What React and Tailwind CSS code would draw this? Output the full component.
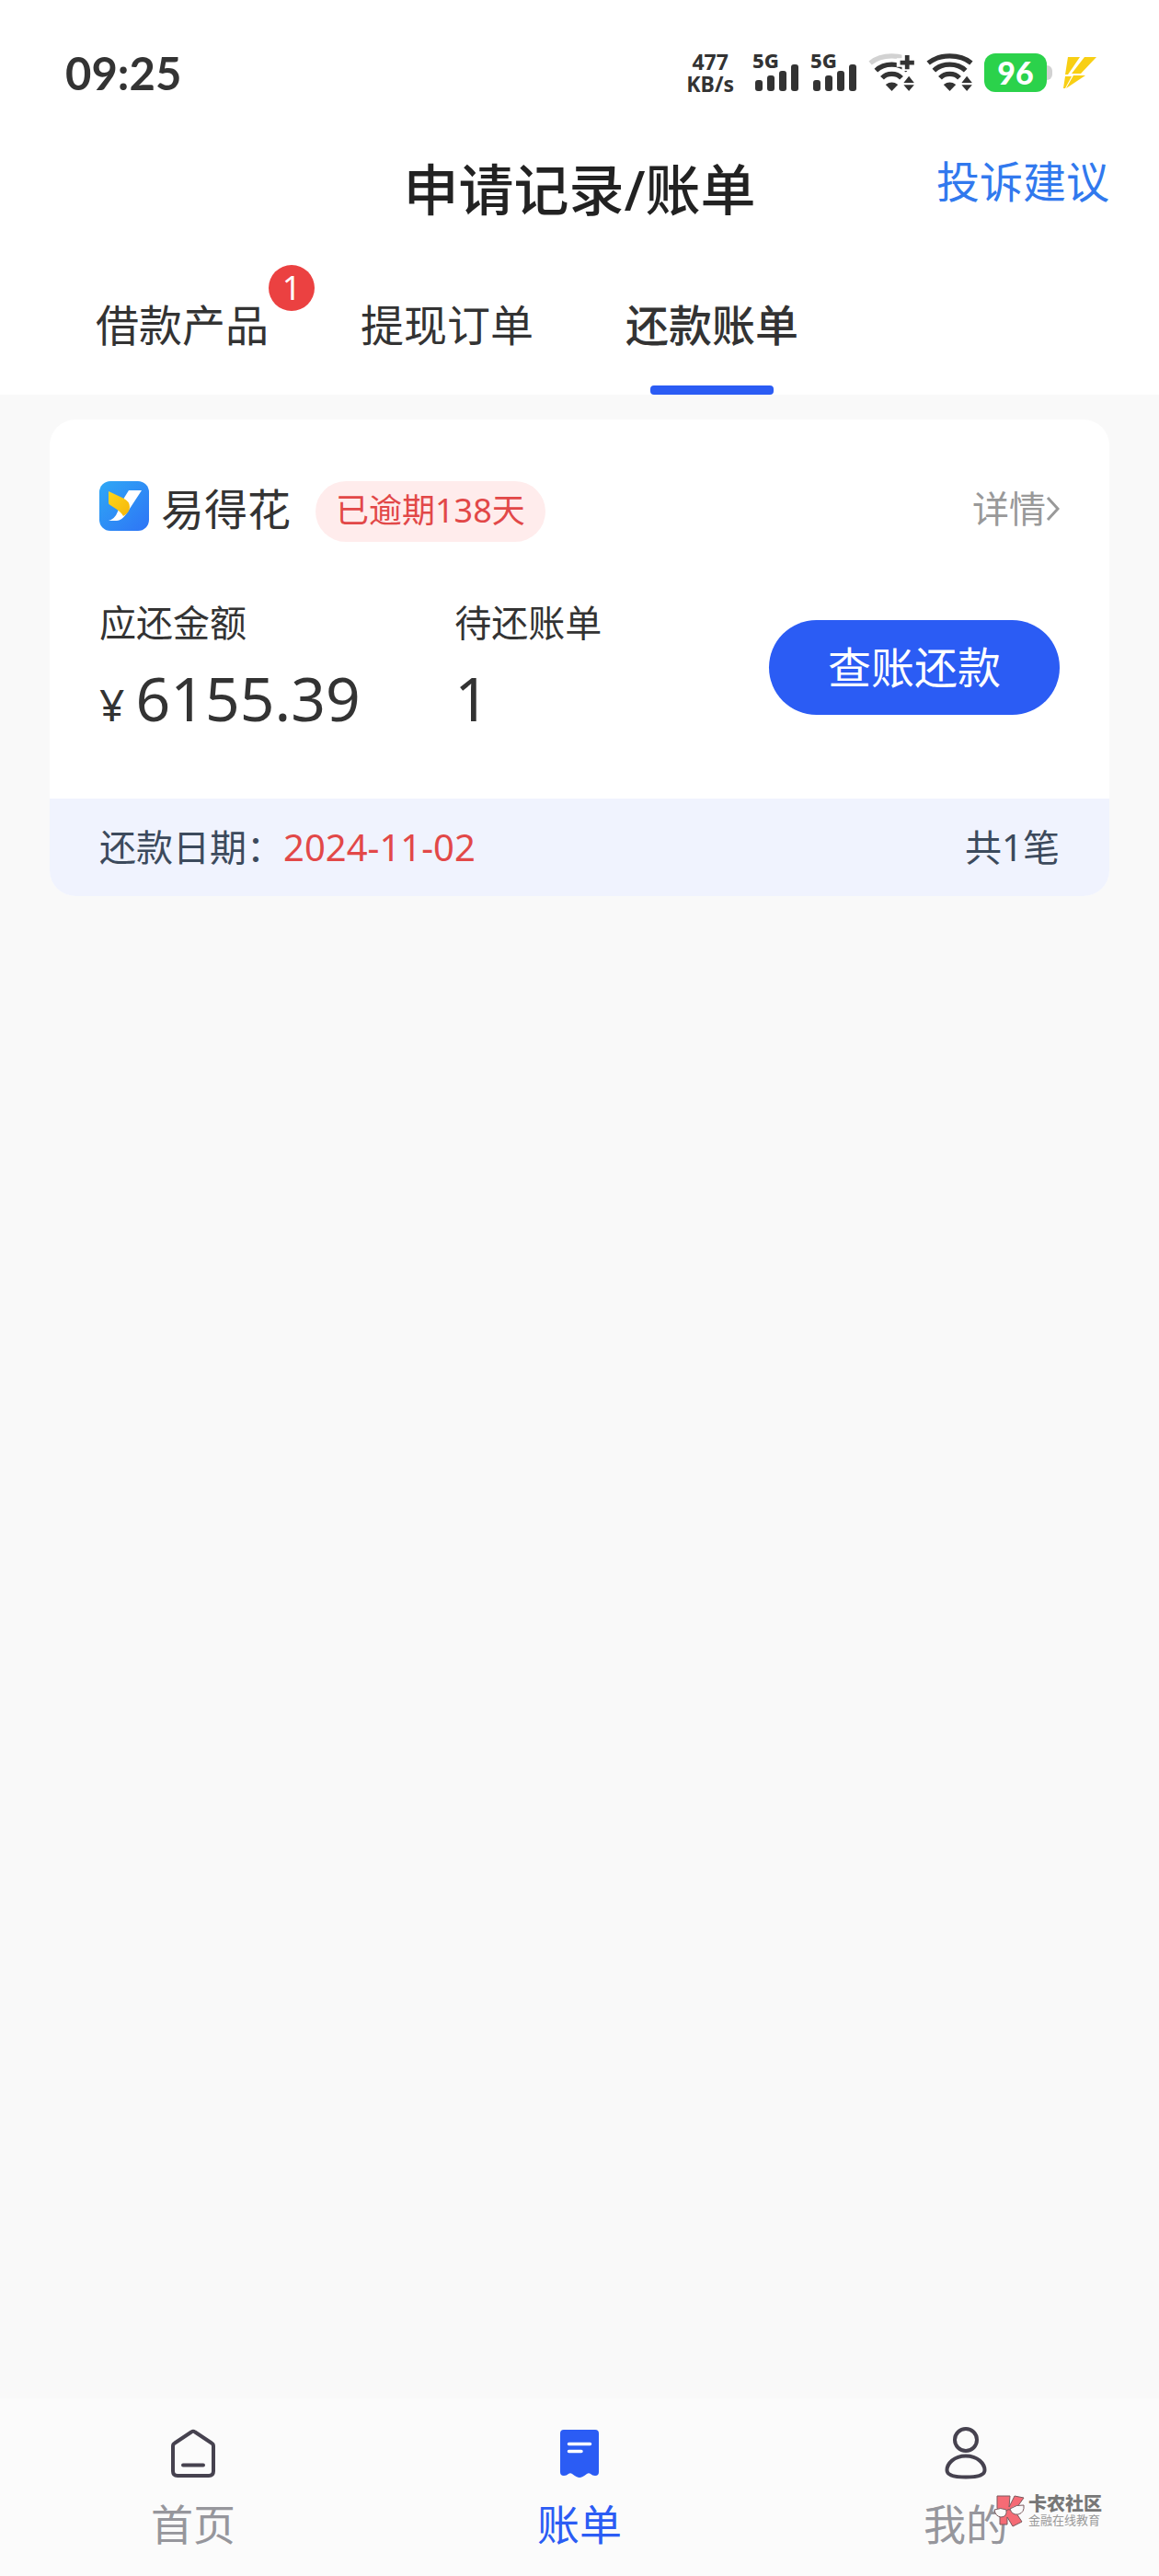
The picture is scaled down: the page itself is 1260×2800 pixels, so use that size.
import React, { useState } from 'react';

const tabs = [
  { id: 'loan', label: '借款产品', badge: 1 },
  { id: 'withdraw', label: '提现订单' },
  { id: 'bill', label: '还款账单' },
];

const Signal = () => (
  <svg width="51" height="58" viewBox="0 -6 51 58" fill="#333333">
    <text x="0" y="18" fontSize="22" fontWeight="800" fontFamily="'Noto Sans', sans-serif">5G</text>
    <rect x="3" y="31" width="8" height="12" rx="3" />
    <rect x="16" y="26" width="8" height="17" rx="3" />
    <rect x="29" y="21" width="8" height="22" rx="3" />
    <rect x="42" y="14" width="8" height="29" rx="3" />
  </svg>
);

const Wifi = ({ plus }) => (
  <svg width="51" height="42" viewBox="0 0 53 44" fill="none" stroke="#333333" strokeWidth="5.5">
    <path d="M2 11 C15 0.5 38 0.5 51 11" stroke={plus ? '#d2d2d2' : '#333333'} />
    <path d="M8.5 19.5 C18 10.5 35 10.5 44.5 19.5" />
    <path d="M15.5 28 C21 22 32 22 37.5 28" />
    <path d="M19.5 35.5 Q26.5 30.5 33.5 35.5 L26.5 43 Z" fill="#333333" stroke="none" />
    <path d="M40 33.5 L46 26 L52 33.5 Z M40 36 L46 43 L52 36 Z" fill="#333333" stroke="none" />
    {plus && (
      <>
        <path d="M43 0 V20 M32 10.5 H53" stroke="#ffffff" strokeWidth="10" />
        <path d="M44 2 V18 M36 10.5 H52" strokeWidth="5" />
      </>
    )}
  </svg>
);

const StatusBar = () => (
  <div className="flex h-[158px] items-center justify-between pl-[71px] pr-[68px] text-[#333333]">
    <time className="font-[Lato,sans-serif] text-[49px] font-bold leading-[49px]">09:25</time>
    <div className="flex items-center gap-3">
      <div className="mr-2 text-center text-[23px] font-bold leading-[24px]">
        <p>477</p>
        <p>KB/s</p>
      </div>
      <Signal />
      <Signal />
      <Wifi plus />
      <Wifi />
      <div className="flex items-center">
        <div className="h-[42px] w-[68px] rounded-xl bg-[#2bd24b] text-center font-[Lato,sans-serif] text-[34px] font-black leading-[42px] text-white">
          96
        </div>
        <span className="h-[16px] w-[6px] rounded-r-md bg-[#d2d2d2]"></span>
      </div>
      <svg width="36" height="34" viewBox="0 0 36 34" fill="#f8cf14">
        <path d="M5 0 H18 L5 19 H2 Z" />
        <path d="M23 0 H36 L19 18 H9 Z" />
        <path d="M2 21 H9 L2 34 H0 Z" />
        <path d="M11 20 H24 L3 34 Z" />
      </svg>
    </div>
  </div>
);

const AppLogo = () => (
  <svg width="54" height="54" viewBox="0 0 54 54">
    <defs>
      <linearGradient id="logoBg" x1="0" y1="0" x2="1" y2="1">
        <stop offset="0" stopColor="#2fa8f5" />
        <stop offset="1" stopColor="#2e74f6" />
      </linearGradient>
      <linearGradient id="logoLeaf" x1="0" y1="0" x2="1" y2="1">
        <stop offset="0" stopColor="#ffd61a" />
        <stop offset="1" stopColor="#f5b60a" />
      </linearGradient>
    </defs>
    <rect width="54" height="54" rx="12" fill="url(#logoBg)" />
    <path d="M32 10 H46 L29 36 Q24 43 19 43 H10 Q17 41 20 33 L27 18 Z" fill="#ffffff" />
    <path d="M10 11 L26 18.5 Q33 22 33 28 Q33 34 26 38 Q24 34 18 30 L11 25.5 Q10 25 10 23 Z" fill="url(#logoLeaf)" />
  </svg>
);

const HomeIcon = () => (
  <svg width="52" height="58" viewBox="0 0 52 58" fill="none" stroke="#46424f" strokeWidth="4" strokeLinecap="round" strokeLinejoin="round">
    <path d="M24 5.5 Q26 4 28 5.5 L46 17.5 Q48 18.5 48 21 V48 Q48 53 43 53 H9 Q4 53 4 48 V21 Q4 18.500 6 17.5 Z" />
    <path d="M15 41.5 H37" />
  </svg>
);

const BillIcon = () => (
  <svg width="52" height="58" viewBox="0 0 52 58">
    <path d="M5 7 Q5 3 9 3 H43 Q47 3 47 7 V49 Q47 53 43 53 Q40 53 38 51 Q36 49.500 34 51 Q29 55 26 55 Q23 55 18 51 Q16 49.500 14 51 Q12 53 9 53 Q5 53 5 49 Z" fill="#2b5cf4" />
    <path d="M14.500 18.500 H37.500 M14.500 26.500 H28" stroke="#ffffff" strokeWidth="3.500" strokeLinecap="round" />
  </svg>
);

const UserIcon = () => (
  <svg width="52" height="58" viewBox="0 0 52 58" fill="none" stroke="#46424f" strokeWidth="4">
    <circle cx="26" cy="14" r="12" />
    <path d="M26 31.5 C13 31.5 5.5 40 5.5 47 C5.5 52 13 54.5 26 54.5 C39 54.5 46.5 52 46.5 47 C46.5 40 39 31.5 26 31.5 Z" />
  </svg>
);

const navItems = [
  { id: 'home', label: '首页', icon: HomeIcon },
  { id: 'bill', label: '账单', icon: BillIcon },
  { id: 'me', label: '我的', icon: UserIcon },
];

const Watermark = () => (
  <div className="pointer-events-none absolute right-[62px] top-[105px] flex gap-1 text-[#777777]">
    <svg width="34" height="36" viewBox="0 0 34 36" stroke="#7a5a5e" strokeWidth="1">
      <path d="M4 1 L18 1 L17 13 L23 1 L33 3 L23 17 L31 29 L21 34 L15 24 L15 32 L7 32 L7 22 L4 14 Z" fill="#f56b75" />
      <path d="M1 16 Q8 13 14 16 Q15 24 8 24 Q2 23 1 16 Z" fill="#fbfbfb" />
      <path d="M18 15 Q25 10 33 11 Q34 19 27 21 Q20 22 18 15 Z" fill="#fbfbfb" />
      <path d="M14 17 Q16 15 18 16" fill="none" />
    </svg>
    <div>
      <p className="text-[20px] font-black leading-[20px]">卡农社区</p>
      <p className="text-[13px] leading-[14px] text-[#999999]">金融在线教育</p>
    </div>
  </div>
);

function App() {
  const [activeTab, setActiveTab] = useState('bill');
  const [activeNav, setActiveNav] = useState('bill');

  return (
    <div className="flex min-h-screen flex-col bg-[#f9f9f9] font-['Noto_Sans','Noto_Sans_CJK_SC',sans-serif] text-[#333333]">
      {/* Header */}
      <header className="bg-white">
        <StatusBar />
        <div className="grid grid-cols-[1fr_auto_1fr] items-start px-[54px] pt-4">
          <h1 className="col-start-2 text-[60px] font-medium leading-[64px] text-[#222222]">申请记录/账单</h1>
          <a href="#feedback" className="justify-self-end text-[47px] leading-[47px] text-[#3179ee]">
            投诉建议
          </a>
        </div>
        <nav className="mt-11 flex gap-[100px] px-[104px]">
          {tabs.map((tab) => (
            <button
              key={tab.id}
              onClick={() => setActiveTab(tab.id)}
              className={`relative h-[147px] cursor-pointer pb-1 text-[47px] leading-[47px] ${
                activeTab === tab.id ? 'font-medium' : ''
              }`}
            >
              {tab.label}
              {tab.badge && (
                <span className="absolute left-full top-[6px] h-[50px] w-[50px] rounded-full bg-[#eb4141] text-[36px] leading-[50px] text-white">
                  {tab.badge}
                </span>
              )}
              {activeTab === tab.id && (
                <span className="absolute bottom-0 left-1/2 h-[10px] w-[134px] -translate-x-1/2 rounded-sm bg-[#2b5cf4]"></span>
              )}
            </button>
          ))}
        </nav>
      </header>

      {/* Bill card */}
      <main className="grow px-[54px] pt-[27px]">
        <section className="overflow-hidden rounded-[28px] bg-white">
          <div className="px-[54px] pb-[74px] pt-[67px]">
            <div className="flex items-start justify-between">
              <div className="flex items-start">
                <AppLogo />
                <h2 className="ml-[13px] text-[47px] leading-[60px]">易得花</h2>
                <span className="ml-[27px] rounded-full bg-[#ffecec] px-[22px] pb-[2px] text-[36px] leading-[64px] text-[#e24848]">
                  已逾期138天
                </span>
              </div>
              <a href="#detail" className="flex items-center text-[40px] leading-[60px] text-[#999999]">
                详情
                <svg width="15" height="26" viewBox="0 0 15 26" fill="none" stroke="currentColor" strokeWidth="3">
                  <path d="M2 1 L13 13 L2 25" />
                </svg>
              </a>
            </div>

            <div className="mt-[68px] flex items-center">
              <div className="w-[37%]">
                <p className="text-[40px] leading-[40px]">应还金额</p>
                <p className="mt-[25px] flex items-baseline gap-3 text-[66px] leading-[72px]">
                  <span className="text-[48px] leading-[48px]">¥</span>6155.39
                </p>
              </div>
              <div>
                <p className="text-[40px] leading-[40px]">待还账单</p>
                <p className="mt-[25px] text-[66px] leading-[72px]">1</p>
              </div>
              <button className="ml-auto h-[103px] cursor-pointer rounded-full bg-[#2b5cf4] px-16 text-[47px] leading-[47px] text-white">
                查账还款
              </button>
            </div>
          </div>

          <div className="flex h-[106px] items-center justify-between bg-[#f0f3fe] px-[54px] text-[40px] leading-[40px] text-[#3c4a5c]">
            <p>
              还款日期：<span className="text-[#e24848]">2024-11-02</span>
            </p>
            <p>共1笔</p>
          </div>
        </section>
      </main>

      {/* Bottom navigation */}
      <footer className="relative bg-[#fbfbfb]">
        <nav className="grid h-[193px] grid-cols-3">
          {navItems.map(({ id, label, icon: Icon }) => (
            <button
              key={id}
              onClick={() => setActiveNav(id)}
              className={`flex cursor-pointer flex-col items-center gap-6 pt-[31px] text-[46px] leading-[46px] ${
                activeNav === id ? 'text-[#2b5cf4]' : 'text-[#96969c]'
              }`}
            >
              <Icon />
              {label}
            </button>
          ))}
        </nav>
        <Watermark />
      </footer>
    </div>
  );
}

export default App;
